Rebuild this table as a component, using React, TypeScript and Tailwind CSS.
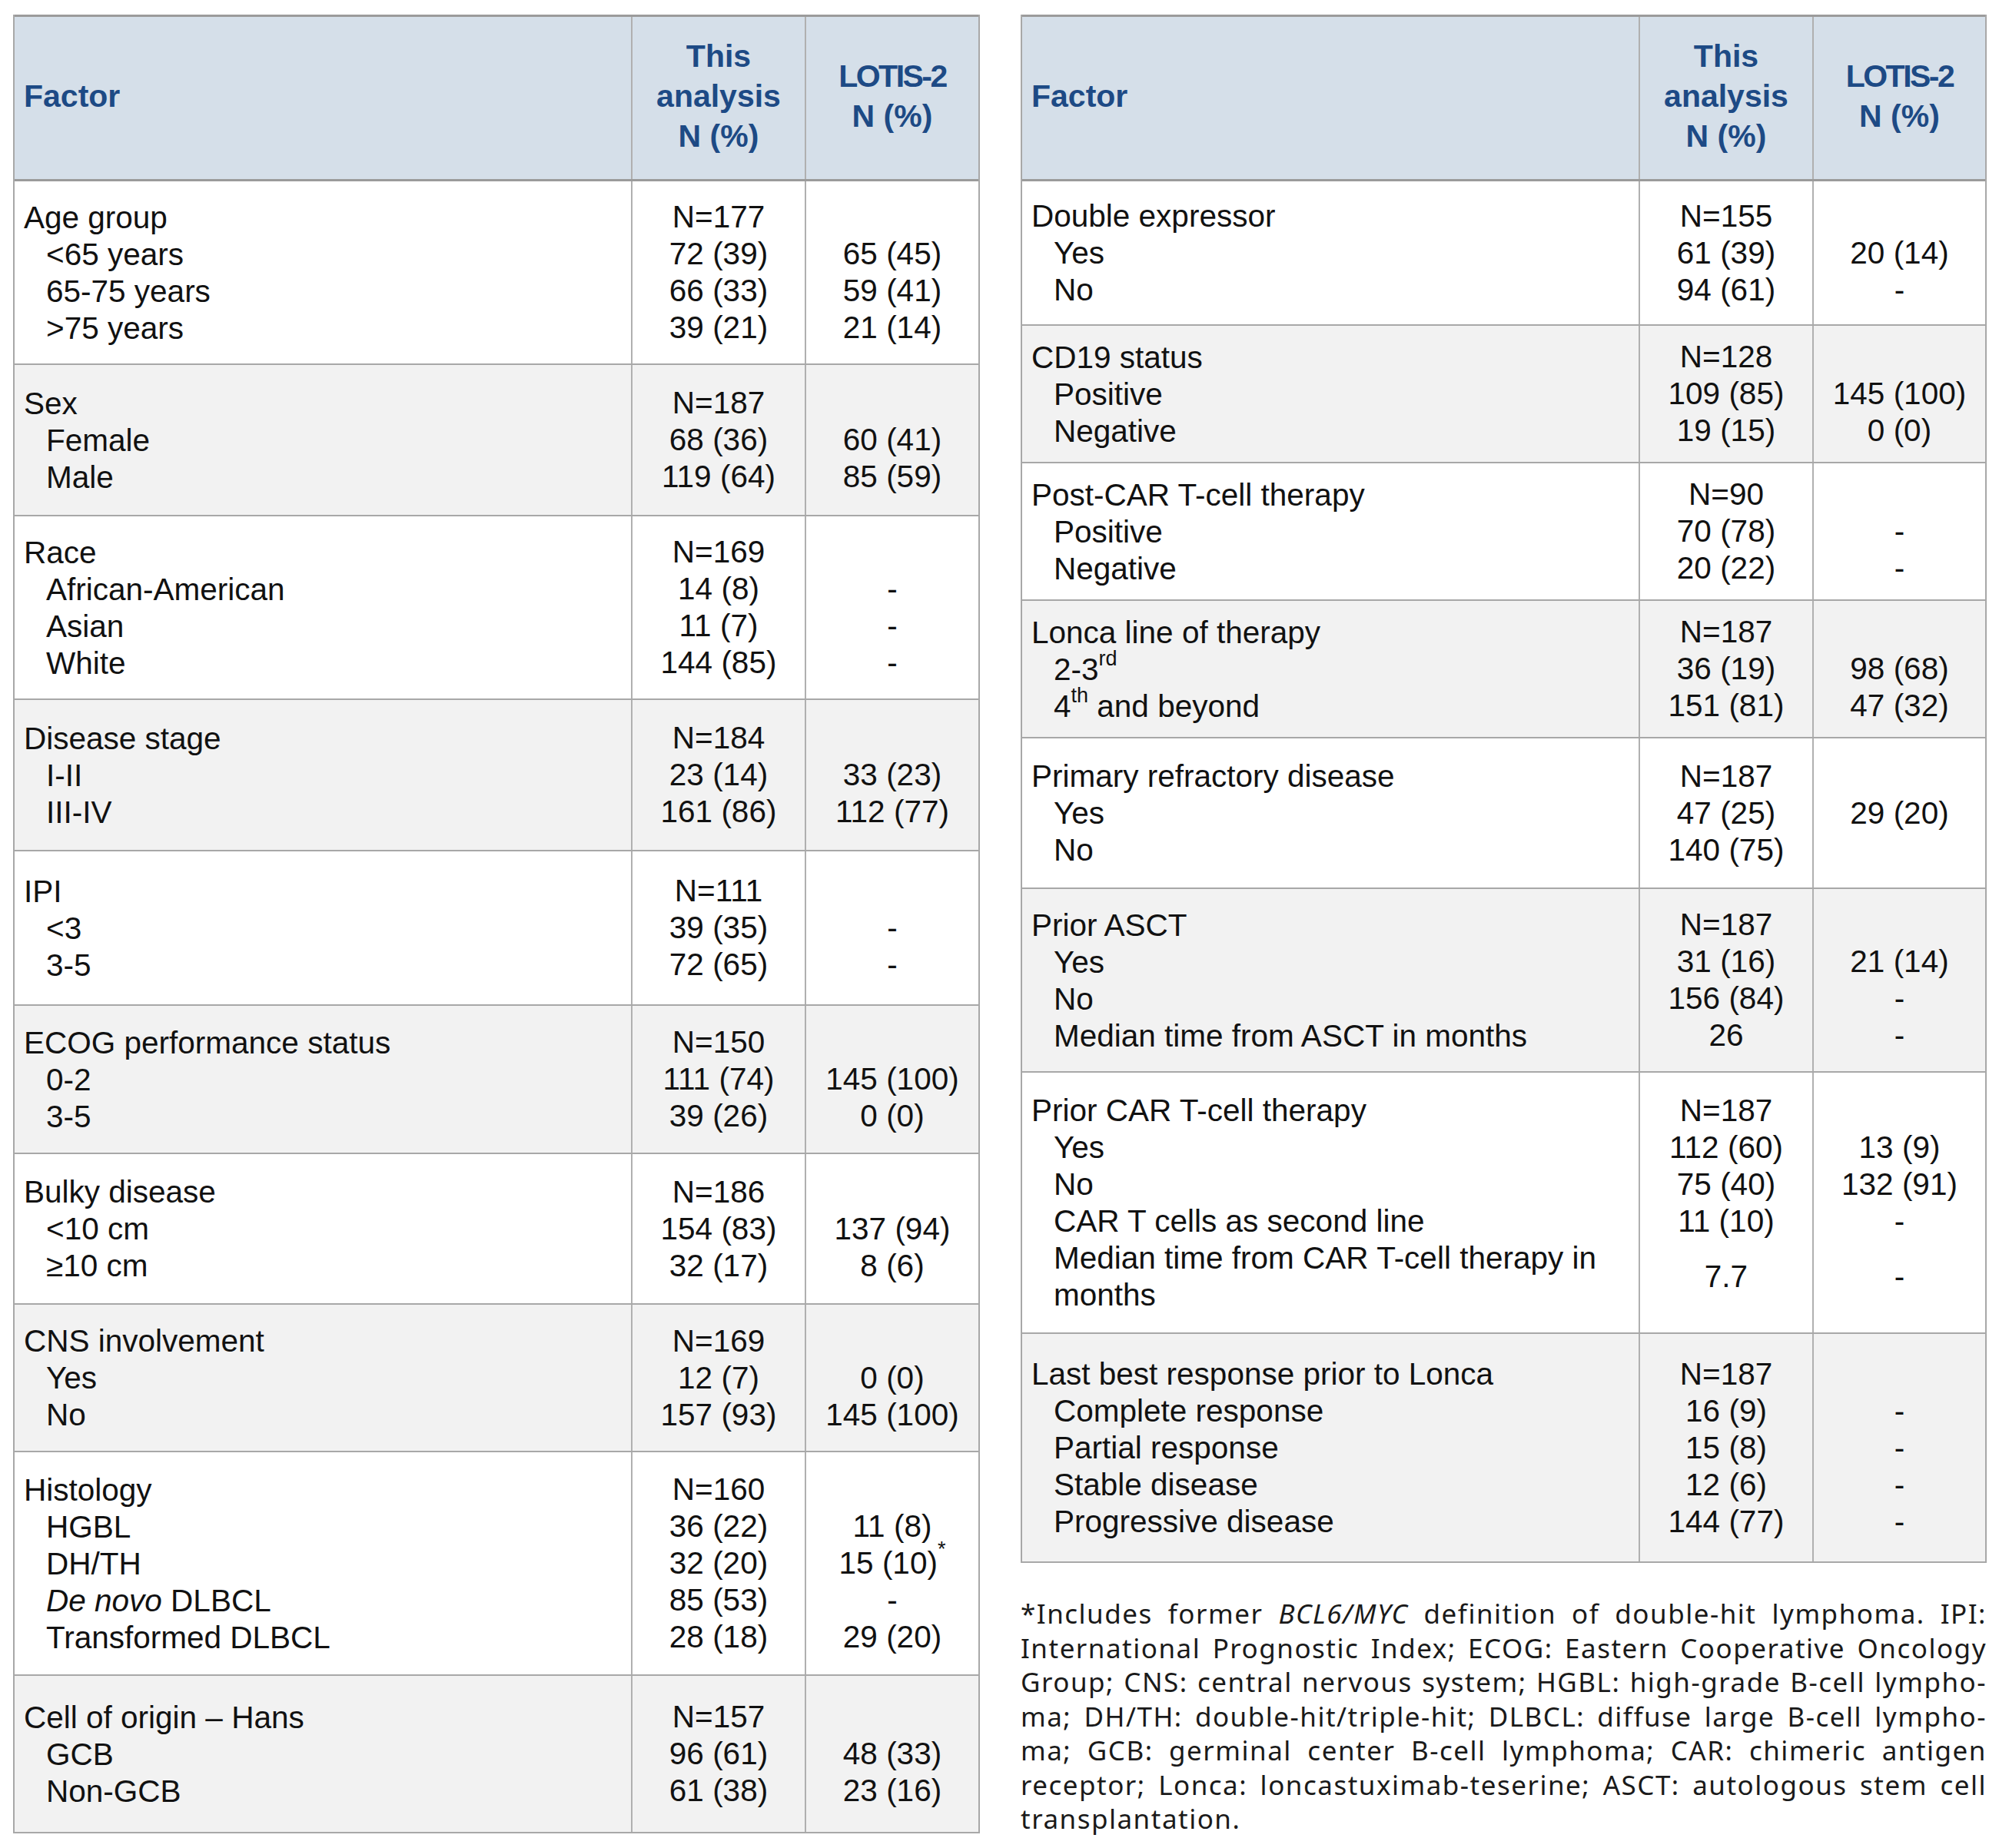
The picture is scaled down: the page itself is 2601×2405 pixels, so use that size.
import React from 'react';

type Line = {
  f: React.ReactNode;
  a?: React.ReactNode;
  b?: React.ReactNode;
  sub?: boolean;
  tall?: boolean;
};

type Group = { h: string; lines: Line[] };

const sup = (s: string) => <sup className="text-[27px] -top-[0.7em]">{s}</sup>;

// Left table rows
const LEFT: Group[] = [
  {
    h: 'h-[239px]',
    lines: [
      { f: 'Age group', a: 'N=177' },
      { f: '<65 years', a: '72 (39)', b: '65 (45)', sub: true },
      { f: '65-75 years', a: '66 (33)', b: '59 (41)', sub: true },
      { f: '>75 years', a: '39 (21)', b: '21 (14)', sub: true },
    ],
  },
  {
    h: 'h-[197px]',
    lines: [
      { f: 'Sex', a: 'N=187' },
      { f: 'Female', a: '68 (36)', b: '60 (41)', sub: true },
      { f: 'Male', a: '119 (64)', b: '85 (59)', sub: true },
    ],
  },
  {
    h: 'h-[239px]',
    lines: [
      { f: 'Race', a: 'N=169' },
      { f: 'African-American', a: '14 (8)', b: '-', sub: true },
      { f: 'Asian', a: '11 (7)', b: '-', sub: true },
      { f: 'White', a: '144 (85)', b: '-', sub: true },
    ],
  },
  {
    h: 'h-[197px]',
    lines: [
      { f: 'Disease stage', a: 'N=184' },
      { f: 'I-II', a: '23 (14)', b: '33 (23)', sub: true },
      { f: 'III-IV', a: '161 (86)', b: '112 (77)', sub: true },
    ],
  },
  {
    h: 'h-[201px]',
    lines: [
      { f: 'IPI', a: 'N=111' },
      { f: '<3', a: '39 (35)', b: '-', sub: true },
      { f: '3-5', a: '72 (65)', b: '-', sub: true },
    ],
  },
  {
    h: 'h-[193px]',
    lines: [
      { f: 'ECOG performance status', a: 'N=150' },
      { f: '0-2', a: '111 (74)', b: '145 (100)', sub: true },
      { f: '3-5', a: '39 (26)', b: '0 (0)', sub: true },
    ],
  },
  {
    h: 'h-[196px]',
    lines: [
      { f: 'Bulky disease', a: 'N=186' },
      { f: '<10 cm', a: '154 (83)', b: '137 (94)', sub: true },
      { f: '≥10 cm', a: '32 (17)', b: '8 (6)', sub: true },
    ],
  },
  {
    h: 'h-[192px]',
    lines: [
      { f: 'CNS involvement', a: 'N=169' },
      { f: 'Yes', a: '12 (7)', b: '0 (0)', sub: true },
      { f: 'No', a: '157 (93)', b: '145 (100)', sub: true },
    ],
  },
  {
    h: 'h-[291px]',
    lines: [
      { f: 'Histology', a: 'N=160' },
      { f: 'HGBL', a: '36 (22)', b: '11 (8)', sub: true },
      { f: 'DH/TH', a: '32 (20)', b: <>15 (10){sup('*')}</>, sub: true },
      { f: <><i>De novo</i> DLBCL</>, a: '85 (53)', b: '-', sub: true },
      { f: 'Transformed DLBCL', a: '28 (18)', b: '29 (20)', sub: true },
    ],
  },
  {
    h: 'h-[205px]',
    lines: [
      { f: 'Cell of origin – Hans', a: 'N=157' },
      { f: 'GCB', a: '96 (61)', b: '48 (33)', sub: true },
      { f: 'Non-GCB', a: '61 (38)', b: '23 (16)', sub: true },
    ],
  },
];

// Right table rows
const RIGHT: Group[] = [
  {
    h: 'h-[188px]',
    lines: [
      { f: 'Double expressor', a: 'N=155' },
      { f: 'Yes', a: '61 (39)', b: '20 (14)', sub: true },
      { f: 'No', a: '94 (61)', b: '-', sub: true },
    ],
  },
  {
    h: 'h-[179px]',
    lines: [
      { f: 'CD19 status', a: 'N=128' },
      { f: 'Positive', a: '109 (85)', b: '145 (100)', sub: true },
      { f: 'Negative', a: '19 (15)', b: '0 (0)', sub: true },
    ],
  },
  {
    h: 'h-[179px]',
    lines: [
      { f: 'Post-CAR T-cell therapy', a: 'N=90' },
      { f: 'Positive', a: '70 (78)', b: '-', sub: true },
      { f: 'Negative', a: '20 (22)', b: '-', sub: true },
    ],
  },
  {
    h: 'h-[179px]',
    lines: [
      { f: 'Lonca line of therapy', a: 'N=187' },
      { f: <>2-3{sup('rd')}</>, a: '36 (19)', b: '98 (68)', sub: true },
      { f: <>4{sup('th')} and beyond</>, a: '151 (81)', b: '47 (32)', sub: true },
    ],
  },
  {
    h: 'h-[196px]',
    lines: [
      { f: 'Primary refractory disease', a: 'N=187' },
      { f: 'Yes', a: '47 (25)', b: '29 (20)', sub: true },
      { f: 'No', a: '140 (75)', sub: true },
    ],
  },
  {
    h: 'h-[239px]',
    lines: [
      { f: 'Prior ASCT', a: 'N=187' },
      { f: 'Yes', a: '31 (16)', b: '21 (14)', sub: true },
      { f: 'No', a: '156 (84)', b: '-', sub: true },
      { f: 'Median time from ASCT in months', a: '26', b: '-', sub: true },
    ],
  },
  {
    h: 'h-[340px]',
    lines: [
      { f: 'Prior CAR T-cell therapy', a: 'N=187' },
      { f: 'Yes', a: '112 (60)', b: '13 (9)', sub: true },
      { f: 'No', a: '75 (40)', b: '132 (91)', sub: true },
      { f: 'CAR T cells as second line', a: '11 (10)', b: '-', sub: true },
      {
        f: <>Median time from CAR T-cell therapy in<br />months</>,
        a: '7.7',
        b: '-',
        sub: true,
        tall: true,
      },
    ],
  },
  {
    h: 'h-[298px]',
    lines: [
      { f: 'Last best response prior to Lonca', a: 'N=187' },
      { f: 'Complete response', a: '16 (9)', b: '-', sub: true },
      { f: 'Partial response', a: '15 (8)', b: '-', sub: true },
      { f: 'Stable disease', a: '12 (6)', b: '-', sub: true },
      { f: 'Progressive disease', a: '144 (77)', b: '-', sub: true },
    ],
  },
];

const FOOTNOTE: React.ReactNode[] = [
  <>*Includes former <i>BCL6/MYC</i> definition of double-hit lymphoma. IPI:</>,
  'International Prognostic Index; ECOG: Eastern Cooperative Oncology',
  'Group; CNS: central nervous system; HGBL: high-grade B-cell lympho-',
  'ma; DH/TH: double-hit/triple-hit; DLBCL: diffuse large B-cell lympho-',
  'ma; GCB: germinal center B-cell lymphoma; CAR: chimeric antigen',
  'receptor; Lonca: loncastuximab-teserine; ASCT: autologous stem cell',
  'transplantation.',
];

function Header() {
  return (
    <div className="flex h-[217px] bg-[#d5dfe9] border-t-[3px] border-b-[3px] border-[#9b9b9b] font-bold text-[41px] leading-[52px] text-[#1d4a85]">
      <div className="w-[802px] pl-[12px] pb-[5px] flex items-center">Factor</div>
      <div className="w-[226px] pb-[5px] border-l-2 border-[#b0b0b0] flex flex-col items-center justify-center text-center">
        <span>This</span>
        <span>analysis</span>
        <span>N (%)</span>
      </div>
      <div className="flex-1 pb-[5px] border-l-2 border-[#b0b0b0] flex flex-col items-center justify-center text-center">
        <span className="tracking-[-2.5px]">LOTIS-2</span>
        <span>N (%)</span>
      </div>
    </div>
  );
}

function GroupRow({ group, shaded }: { group: Group; shaded: boolean }) {
  return (
    <div
      className={`flex ${group.h} border-b-2 border-[#a8a8a8] ${shaded ? 'bg-[#f2f2f2]' : 'bg-white'}`}
    >
      <div className="w-[802px] pl-[12px] flex flex-col justify-center">
        {group.lines.map((l, i) => (
          <div
            key={i}
            className={`${l.tall ? 'h-24' : 'h-12 whitespace-nowrap'} leading-[48px] ${l.sub ? 'pl-[29px]' : ''}`}
          >
            {l.f}
          </div>
        ))}
      </div>
      <div className="w-[226px] border-l-2 border-[#b0b0b0] flex flex-col justify-center">
        {group.lines.map((l, i) => (
          <div
            key={i}
            className={`${l.tall ? 'h-24' : 'h-12'} flex items-center justify-center whitespace-nowrap`}
          >
            {l.a}
          </div>
        ))}
      </div>
      <div className="flex-1 border-l-2 border-[#b0b0b0] flex flex-col justify-center">
        {group.lines.map((l, i) => (
          <div
            key={i}
            className={`${l.tall ? 'h-24' : 'h-12'} flex items-center justify-center whitespace-nowrap`}
          >
            {l.b}
          </div>
        ))}
      </div>
    </div>
  );
}

function DataTable({ groups, width }: { groups: Group[]; width: string }) {
  return (
    <div className={`${width} border-x-2 border-[#a8a8a8]`}>
      <Header />
      {groups.map((g, i) => (
        <GroupRow key={i} group={g} shaded={i % 2 === 1} />
      ))}
    </div>
  );
}

export default function App() {
  return (
    <div className="w-[2601px] min-h-[2405px] bg-white pt-[19px] pl-[17px] flex items-start gap-[53px] font-['Liberation_Sans',Arial,sans-serif] text-[40.5px] text-[#111111]">
      <DataTable groups={LEFT} width="w-[1258px]" />

      <div className="w-[1257px] flex flex-col">
        <DataTable groups={RIGHT} width="w-[1257px]" />

        {/* Footnote */}
        <div className="mt-[44px] font-['Noto_Sans',sans-serif] text-[35px] tracking-[1.5px] text-[#1a1a1a]">
          {FOOTNOTE.map((line, i) => (
            <div
              key={i}
              className={`h-[44.5px] leading-[44.5px] whitespace-nowrap ${i < FOOTNOTE.length - 1 ? '[text-align-last:justify] text-justify' : ''}`}
            >
              {line}
            </div>
          ))}
        </div>
      </div>
    </div>
  );
}
